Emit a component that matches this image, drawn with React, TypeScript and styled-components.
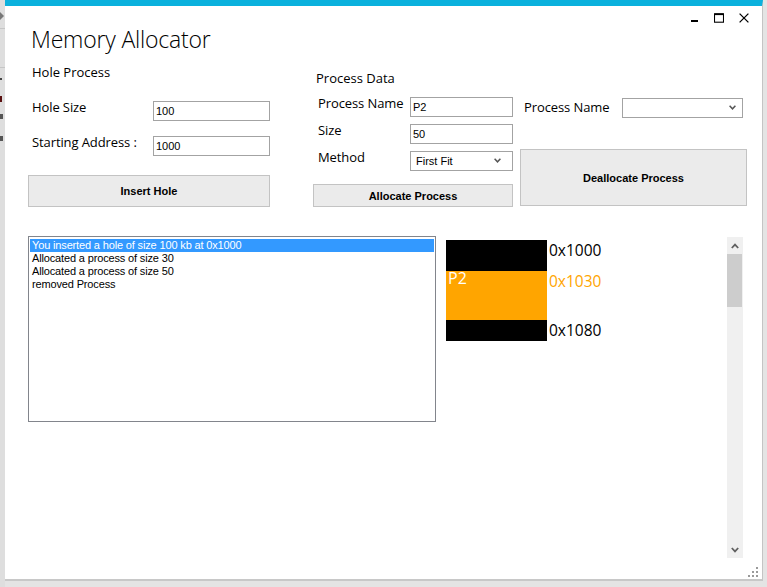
import React from "react";
import styled, { createGlobalStyle } from "styled-components";

const Global = createGlobalStyle`
  html, body { margin: 0; padding: 0; }
  body {
    width: 767px;
    height: 587px;
    overflow: hidden;
    background: #e4e4e4;
    font-family: "Open Sans", "Noto Sans", sans-serif;
  }
  * { box-sizing: border-box; }
`;

const Screen = styled.div`
  display: flex;
  width: 767px;
  height: 587px;
  background: #e4e4e4;
`;

const BackStrip = styled.div`
  width: 5px;
  flex: none;
  height: 587px;
  overflow: hidden;
  background: #dedede;
  display: flex;
  flex-direction: column;
`;

const StripMark = styled.div<{ $mt: number; $h?: number; $w?: number; $color?: string }>`
  margin-top: ${(p) => p.$mt}px;
  height: ${(p) => p.$h ?? 1}px;
  width: ${(p) => p.$w ?? 5}px;
  background: ${(p) => p.$color ?? "#c6c6c6"};
`;

const StripTriangle = styled.div`
  margin-top: 12px;
  width: 0;
  height: 0;
  border-top: 4px solid transparent;
  border-bottom: 4px solid transparent;
  border-left: 4px solid #777;
`;

const Window = styled.div`
  width: 758px;
  height: 581px;
  flex: none;
  background: #fff;
  border-top: 6px solid #0bb1dd;
  border-right: 1px solid #c4c4c4;
  border-bottom: 2px solid #c8c8c8;
  display: flex;
  flex-direction: column;
`;

const CaptionBar = styled.div`
  display: flex;
  justify-content: flex-end;
  gap: 15px;
  padding: 7px 13px 0 0;
  height: 17px;
`;

const CaptionIcon = styled.svg`
  width: 10px;
  height: 10px;
  display: block;
`;

const Title = styled.h1`
  margin: 1px 0 0 26px;
  height: 30px;
  font-size: 23px;
  line-height: 30px;
  font-weight: 300;
  color: #000;
  letter-spacing: -0.2px;
`;

const TopRow = styled.div`
  display: flex;
  align-items: flex-start;
  padding-left: 23px;
`;

const Column = styled.div<{ $width: number; $top: number; $left?: number }>`
  display: flex;
  flex-direction: column;
  width: ${(p) => p.$width}px;
  padding-top: ${(p) => p.$top}px;
  margin-left: ${(p) => p.$left ?? 0}px;
`;

const GroupLabel = styled.div<{ $indent: number }>`
  padding-left: ${(p) => p.$indent}px;
  font-size: 13px;
  line-height: 16px;
  color: #000;
`;

const Field = styled.div<{ $mt: number }>`
  display: flex;
  align-items: flex-start;
  margin-top: ${(p) => p.$mt}px;
  height: 20px;
`;

const FieldLabel = styled.label<{ $width: number; $indent: number; $dy?: number }>`
  width: ${(p) => p.$width}px;
  flex: none;
  padding-left: ${(p) => p.$indent}px;
  margin-top: ${(p) => p.$dy ?? -2}px;
  font-size: 13px;
  line-height: 16px;
  color: #000;
  white-space: nowrap;
  letter-spacing: -0.1px;
`;

const TextBox = styled.input<{ $width: number }>`
  width: ${(p) => p.$width}px;
  height: 20px;
  border: 1px solid #a3a3a3;
  padding: 0 2px;
  margin: 0;
  font-family: "Liberation Sans", Arial, sans-serif;
  font-size: 11px;
  color: #000;
  background: #fff;
  outline: none;
  border-radius: 0;
`;

const ComboBox = styled.div<{ $width: number; $chevronRight: number }>`
  position: relative;
  width: ${(p) => p.$width}px;
  height: 20px;
  border: 1px solid #a3a3a3;
  background: #fff;
  display: flex;
  align-items: center;
  padding-left: 5px;
  font-family: "Liberation Sans", Arial, sans-serif;
  font-size: 11px;
  color: #000;
  svg {
    position: absolute;
    right: ${(p) => p.$chevronRight}px;
    top: 6px;
  }
`;

const Button = styled.button<{ $mt: number; $height: number }>`
  margin-top: ${(p) => p.$mt}px;
  height: ${(p) => p.$height}px;
  width: 100%;
  background: #ebebeb;
  border: 1px solid #c3c3c3;
  border-radius: 0;
  padding: 0;
  font-family: "Liberation Sans", Arial, sans-serif;
  font-weight: bold;
  font-size: 11px;
  color: #000;
  cursor: default;
`;

const BottomArea = styled.div`
  display: flex;
  align-items: flex-start;
  padding-left: 23px;
  margin-top: 29px;
`;

const ListBox = styled.div`
  width: 408px;
  height: 186px;
  border: 1px solid #82858c;
  padding: 2px 1px;
  background: #fff;
  display: flex;
  flex-direction: column;
`;

const ListItem = styled.div<{ $selected?: boolean }>`
  height: 13px;
  line-height: 13px;
  padding-left: 2px;
  font-family: "Liberation Sans", Arial, sans-serif;
  font-size: 11px;
  letter-spacing: -0.15px;
  white-space: nowrap;
  color: ${(p) => (p.$selected ? "#fff" : "#000")};
  background: ${(p) => (p.$selected ? "#3399ff" : "transparent")};
`;

const DiagramPanel = styled.div`
  margin-left: 10px;
  width: 297px;
  height: 321px;
  display: flex;
`;

const Diagram = styled.div`
  flex: 1;
  padding-top: 4px;
  display: flex;
  flex-direction: column;
`;

const Segment = styled.div`
  display: flex;
  align-items: flex-start;
`;

const Block = styled.div<{ $h: number; $color: string }>`
  width: 101px;
  height: ${(p) => p.$h}px;
  background: ${(p) => p.$color};
  padding-left: 2px;
  font-size: 16px;
  line-height: 15px;
  color: #fff;
`;

const Addr = styled.div<{ $color: string }>`
  margin-left: 2px;
  font-size: 15.5px;
  line-height: 20px;
  color: ${(p) => p.$color};
`;

const ScrollBar = styled.div`
  width: 16px;
  height: 100%;
  background: #f0f0f0;
  display: flex;
  flex-direction: column;
  margin-top: 1px;
`;

const ScrollArrow = styled.div`
  height: 17px;
  display: flex;
  align-items: center;
  justify-content: center;
`;

const ScrollThumb = styled.div`
  height: 53px;
  margin: 0 1px 0 0;
  background: #cdcdcd;
`;

const ScrollTrack = styled.div`
  flex: 1;
`;

const Footer = styled.div`
  margin-top: auto;
  display: flex;
  justify-content: flex-end;
  padding: 0 2px 0 0;
`;

const Chevron = ({ up, color = "#606060" }: { up?: boolean; color?: string }) => (
  <svg width="8" height="6" viewBox="0 0 8 6">
    <path
      d={up ? "M0.8 5 L4 1.6 L7.2 5" : "M0.8 1 L4 4.4 L7.2 1"}
      fill="none"
      stroke={color}
      strokeWidth="1.8"
    />
  </svg>
);

const SmallChevron = () => (
  <svg width="7" height="5" viewBox="0 0 7 5">
    <path d="M0.6 0.8 L3.5 3.8 L6.4 0.8" fill="none" stroke="#555" strokeWidth="1.5" />
  </svg>
);

const segments = [
  { h: 31, color: "#000", addr: "0x1000", addrColor: "#000", name: "" },
  { h: 49, color: "#ffa500", addr: "0x1030", addrColor: "#ffa500", name: "P2" },
  { h: 21, color: "#000", addr: "0x1080", addrColor: "#000", name: "" },
];

const log = [
  "You inserted a hole of size 100 kb at 0x1000",
  "Allocated a process of size 30",
  "Allocated a process of size 50",
  "removed Process",
];

export default function App() {
  return (
    <>
      <Global />
      <Screen>
        <BackStrip>
          <StripTriangle />
          <StripMark $mt={8} />
          <StripMark $mt={38} />
          <StripMark $mt={10} $h={2} $w={2} $color="#444" />
          <StripMark $mt={16} $h={6} $w={2} $color="#5a1010" />
          <StripMark $mt={12} $h={5} $w={3} $color="#555" />
          <StripMark $mt={17} $h={5} $w={3} $color="#555" />
        </BackStrip>
        <Window>
          <CaptionBar>
            <CaptionIcon viewBox="0 0 10 10">
              <rect x="2" y="7" width="7" height="2" fill="#000" />
            </CaptionIcon>
            <CaptionIcon viewBox="0 0 10 10">
              <rect x="0.5" y="0.8" width="9" height="8.4" fill="none" stroke="#000" strokeWidth="1.1" />
              <rect x="0.5" y="0.5" width="9" height="1.6" fill="#000" />
            </CaptionIcon>
            <CaptionIcon viewBox="0 0 10 10">
              <path d="M0.6 0.6 L9.4 9.4 M9.4 0.6 L0.6 9.4" stroke="#000" strokeWidth="1.3" />
            </CaptionIcon>
          </CaptionBar>
          <Title>Memory Allocator</Title>
          <TopRow>
            <Column $width={242} $top={10}>
              <GroupLabel $indent={4}>Hole Process</GroupLabel>
              <Field $mt={21}>
                <FieldLabel $width={125} $indent={4}>Hole Size</FieldLabel>
                <TextBox $width={117} value="100" readOnly />
              </Field>
              <Field $mt={15}>
                <FieldLabel $width={125} $indent={4}>Starting Address :</FieldLabel>
                <TextBox $width={117} value="1000" readOnly />
              </Field>
              <Button $mt={19} $height={32}>Insert Hole</Button>
            </Column>
            <Column $width={200} $top={15.5} $left={43}>
              <GroupLabel $indent={3}>Process Data</GroupLabel>
              <Field $mt={11.5}>
                <FieldLabel $width={97} $indent={5}>Process Name</FieldLabel>
                <TextBox $width={103} value="P2" readOnly />
              </Field>
              <Field $mt={7}>
                <FieldLabel $width={97} $indent={5}>Size</FieldLabel>
                <TextBox $width={103} value="50" readOnly />
              </Field>
              <Field $mt={7}>
                <FieldLabel $width={97} $indent={5}>Method</FieldLabel>
                <ComboBox $width={103} $chevronRight={11}>
                  First Fit
                  <SmallChevron />
                </ComboBox>
              </Field>
              <Button $mt={13} $height={23}>Allocate Process</Button>
            </Column>
            <Column $width={227} $top={44} $left={7}>
              <Field $mt={0}>
                <FieldLabel $width={102} $indent={4} $dy={1}>Process Name</FieldLabel>
                <ComboBox $width={121} $chevronRight={6}>
                  <SmallChevron />
                </ComboBox>
              </Field>
              <Button $mt={31} $height={57}>Deallocate Process</Button>
            </Column>
          </TopRow>
          <BottomArea>
            <ListBox>
              {log.map((t, i) => (
                <ListItem key={i} $selected={i === 0}>{t}</ListItem>
              ))}
            </ListBox>
            <DiagramPanel>
              <Diagram>
                {segments.map((s) => (
                  <Segment key={s.addr}>
                    <Block $h={s.h} $color={s.color}>{s.name}</Block>
                    <Addr $color={s.addrColor}>{s.addr}</Addr>
                  </Segment>
                ))}
              </Diagram>
              <ScrollBar>
                <ScrollArrow><Chevron up /></ScrollArrow>
                <ScrollThumb />
                <ScrollTrack />
                <ScrollArrow><Chevron /></ScrollArrow>
              </ScrollBar>
            </DiagramPanel>
          </BottomArea>
          <Footer>
            <svg width="12" height="12" viewBox="0 0 12 12">
              <g fill="#9a9a9a">
                <rect x="8" y="0" width="2" height="2" />
                <rect x="4" y="4" width="2" height="2" />
                <rect x="8" y="4" width="2" height="2" />
                <rect x="0" y="8" width="2" height="2" />
                <rect x="4" y="8" width="2" height="2" />
                <rect x="8" y="8" width="2" height="2" />
              </g>
            </svg>
          </Footer>
        </Window>
      </Screen>
    </>
  );
}
